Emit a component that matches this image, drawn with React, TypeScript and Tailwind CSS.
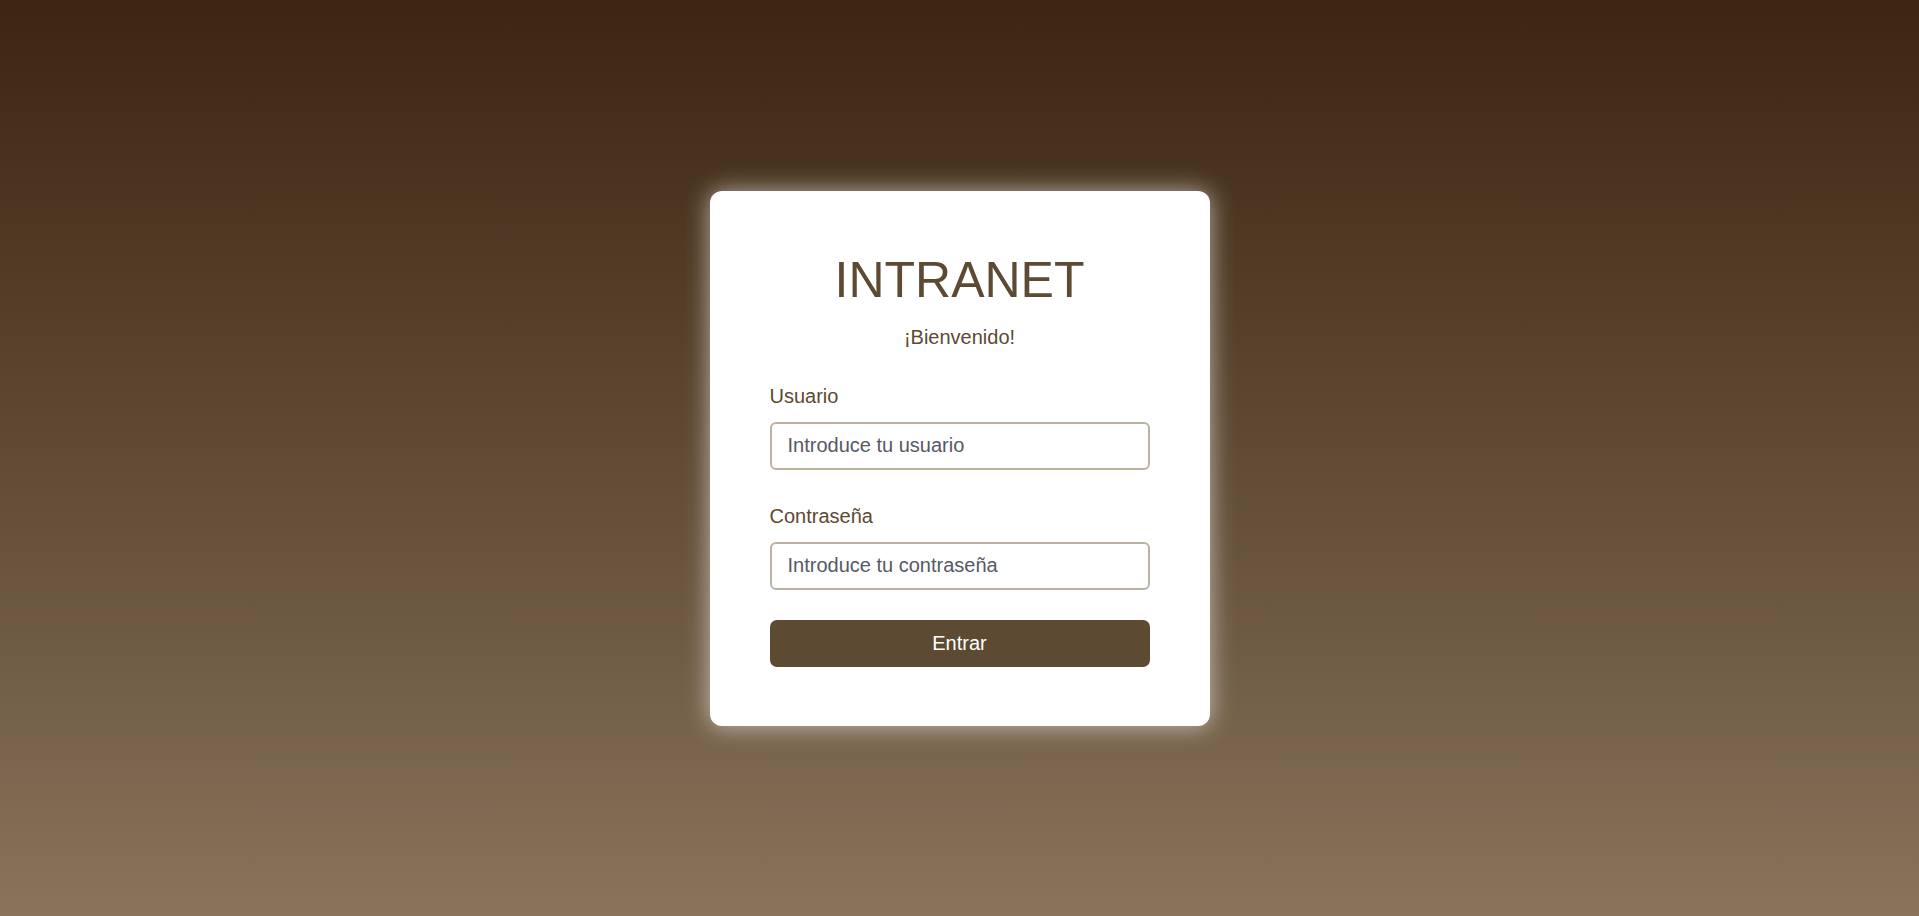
export default function App() {
  return (
    <div
      className="min-h-screen w-full bg-linear-to-b from-[#3b2711] to-[#87745b] flex items-center justify-center"
      style={{ fontFamily: '"Liberation Sans", Arial, sans-serif' }}
    >
      <div className="w-[500px] bg-white rounded-[12px] px-[60px] pt-[60px] pb-[59px] shadow-[0_0_25px_rgba(255,255,255,0.6)]">
        <h1 className="text-center text-[50px] leading-[58px] text-[#5c4a32] font-normal">INTRANET</h1>
        <p className="mt-[17px] text-center text-[20px] leading-[23px] text-[#5c4a32]">¡Bienvenido!</p>

        <form className="mt-[36px]" onSubmit={(e) => e.preventDefault()}>
          <label className="block text-[20px] leading-[23px] text-[#5c4a32]" htmlFor="user">
            Usuario
          </label>
          <input
            id="user"
            type="text"
            placeholder="Introduce tu usuario"
            className="mt-[14px] block w-full h-[48px] rounded-[6px] border-2 border-[#bdb1a1] px-[16px] text-[20px] text-[#333] placeholder:text-[#555a64] outline-none"
          />

          <label className="mt-[35px] block text-[20px] leading-[23px] text-[#5c4a32]" htmlFor="pass">
            Contraseña
          </label>
          <input
            id="pass"
            type="password"
            placeholder="Introduce tu contraseña"
            className="mt-[14px] block w-full h-[48px] rounded-[6px] border-2 border-[#bdb1a1] px-[16px] text-[20px] text-[#333] placeholder:text-[#555a64] outline-none"
          />

          <button
            type="submit"
            className="mt-[30px] block w-full h-[47px] rounded-[7px] bg-[#5c4b32] text-white text-[20px]"
          >
            Entrar
          </button>
        </form>
      </div>
    </div>
  )
}
